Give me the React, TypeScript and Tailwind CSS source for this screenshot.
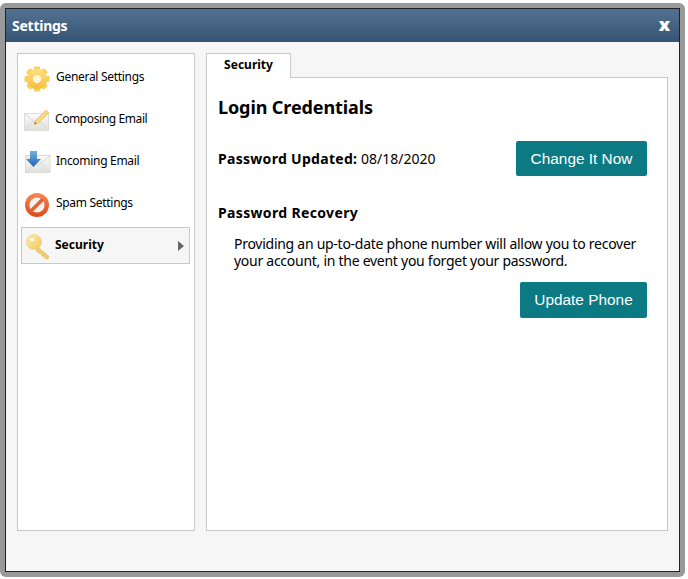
import type { ReactNode } from 'react'

const tahoma = 'font-["Noto_Sans",sans-serif]'

function GearIcon() {
  const teeth = [0, 45, 90, 135, 180, 225, 270, 315]
  return (
    <svg width="26" height="26" viewBox="0 0 26 26">
      <defs>
        <linearGradient id="gear" x1="0" y1="0" x2="0" y2="1">
          <stop offset="0" stopColor="#fddc7c" />
          <stop offset="1" stopColor="#f8c145" />
        </linearGradient>
      </defs>
      {teeth.map((a) => (
        <rect key={a} x="10" y="0.5" width="6" height="6" rx="1" fill="#fbcd5c" transform={`rotate(${a} 13 13)`} />
      ))}
      <circle cx="13" cy="13" r="7" fill="none" stroke="url(#gear)" strokeWidth="6.500" />
      <circle cx="13" cy="13" r="3.800" fill="#fdf6dc" />
    </svg>
  )
}

function PencilEnvelopeIcon() {
  return (
    <svg width="26" height="22" viewBox="0 0 26 22">
      <defs>
        <linearGradient id="env1" x1="0" y1="0" x2="0" y2="1">
          <stop offset="0" stopColor="#fbfbf9" />
          <stop offset="1" stopColor="#dfe0dc" />
        </linearGradient>
      </defs>
      <rect x="0.5" y="4.500" width="24" height="17" fill="url(#env1)" stroke="#dcdcd8" />
      <path d="M1 5l11.500 9L24 5M1 21l8.500-9M24 21l-8.500-9" fill="none" stroke="#d9d9d4" />
      <path d="M10 15.500l2-4.500L22 1l3 2.500-10 10.500z" fill="#f8d780" stroke="#ecc05c" strokeWidth="0.6" />
      <path d="M10 15.500l1-3 2 2z" fill="#a9814a" />
    </svg>
  )
}

function ArrowEnvelopeIcon() {
  return (
    <svg width="26" height="22" viewBox="0 0 26 22">
      <defs>
        <linearGradient id="env2" x1="0" y1="0" x2="0" y2="1">
          <stop offset="0" stopColor="#fbfbf9" />
          <stop offset="1" stopColor="#dfe0dc" />
        </linearGradient>
        <linearGradient id="arrow" x1="0" y1="0" x2="0" y2="1">
          <stop offset="0" stopColor="#76aee0" />
          <stop offset="1" stopColor="#1b66b4" />
        </linearGradient>
      </defs>
      <rect x="0.5" y="4.500" width="24.500" height="17" fill="url(#env2)" stroke="#dcdcd8" />
      <path d="M1 5l12 9 12-9M1 21l9-9M25 21l-9-9" fill="none" stroke="#d9d9d4" />
      <path d="M5 0h7v8h4l-7.500 8L1 8h4z" fill="url(#arrow)" />
    </svg>
  )
}

function BanIcon() {
  return (
    <svg width="26" height="26" viewBox="0 0 26 26">
      <defs>
        <linearGradient id="ban" x1="0" y1="0" x2="0" y2="1">
          <stop offset="0" stopColor="#f58a55" />
          <stop offset="1" stopColor="#dd4a1c" />
        </linearGradient>
      </defs>
      <circle cx="13" cy="13" r="12" fill="url(#ban)" />
      <circle cx="13" cy="13" r="7.600" fill="#f5f1ec" />
      <path d="M6 17.500L17.500 6l2.500 2.500L8.500 20z" fill="#e8602c" />
    </svg>
  )
}

function KeyIcon() {
  return (
    <svg width="25" height="26" viewBox="0 0 25 26">
      <defs>
        <linearGradient id="key" x1="0" y1="0" x2="1" y2="1">
          <stop offset="0" stopColor="#fdeea8" />
          <stop offset="1" stopColor="#edc866" />
        </linearGradient>
      </defs>
      <path d="M12 13l11 9.500-1 2.500-3-.5-1-2.500-2 .2-.5-2.500-2.500-.2-3-2.500z" fill="#f0cc70" stroke="#deb552" strokeWidth="0.5" />
      <circle cx="8" cy="8" r="7.600" fill="url(#key)" stroke="#ecca70" strokeWidth="0.6" />
      <ellipse cx="6" cy="5.500" rx="2.200" ry="1.800" fill="#fffbe0" />
    </svg>
  )
}

interface MenuItemProps {
  icon: ReactNode
  label: string
  active?: boolean
  iconClass?: string
  textClass?: string
}

function MenuItem({ icon, label, active, iconClass, textClass }: MenuItemProps) {
  return (
    <div
      className={
        active
          ? 'h-[37px] flex items-center border border-[#c8c8c8] bg-[#f6f6f6]'
          : 'h-[37px] flex items-center border border-transparent'
      }
    >
      <div className={`w-[33px] flex-shrink-0 flex justify-center ${iconClass ?? ''}`}>{icon}</div>
      <span className={`${tahoma} text-[12px] text-black ${active ? 'font-bold' : ''} ${textClass ?? ''}`}>{label}</span>
      {active && (
        <div className="ml-auto mr-[5px] w-0 h-0 border-y-[5px] border-y-transparent border-l-[6px] border-l-[#666]" />
      )}
    </div>
  )
}

export default function App() {
  return (
    <div className="w-[688px] h-[579px] bg-white pt-[3px]">
      <div className="w-[685px] h-[574px] bg-[#999999] rounded-[6px] p-[5px]">
        <div className="h-full border border-[#222] flex flex-col bg-[#f6f6f6]">
          {/* Title bar */}
          <div className="h-[33px] flex-shrink-0 flex items-center justify-between pl-[6px] pr-[9px] bg-gradient-to-b from-[#537191] to-[#365574]">
            <span className={`${tahoma} text-[14px] font-bold text-white tracking-[-0.25px]`}>Settings</span>
            <span className={`${tahoma} text-[18px] font-black text-white leading-none -mt-[3px]`}>x</span>
          </div>

          {/* Body */}
          <div className="flex-1 flex gap-[11px] pt-[11px] pb-[40px] px-[11px]">
            {/* Sidebar */}
            <nav className="w-[178px] flex-shrink-0 border border-[#c8c8c8] bg-white pt-[5px] pl-[3px] pr-[4px] flex flex-col gap-[5px]">
              <MenuItem icon={<GearIcon />} label="General Settings" iconClass="-ml-[2px] mr-[2px] mt-[3px]" textClass="ml-[1px] -mt-[1px] tracking-[-0.3px]" />
              <MenuItem icon={<PencilEnvelopeIcon />} label="Composing Email" iconClass="-ml-[2px] mr-[2px] mt-[1px]" textClass="-mt-[2px] tracking-[-0.4px]" />
              <MenuItem icon={<ArrowEnvelopeIcon />} label="Incoming Email" iconClass="-ml-[1px] mr-[1px]" textClass="ml-[1px] -mt-[2px] tracking-[-0.3px]" />
              <MenuItem icon={<BanIcon />} label="Spam Settings" iconClass="-ml-[2px] mr-[2px] mt-[2px]" textClass="ml-[1px] -mt-[2px] tracking-[-0.3px]" />
              <MenuItem icon={<KeyIcon />} label="Security" active iconClass="mt-[2px]" textClass="-mt-[2px]" />
            </nav>

            {/* Main panel */}
            <div className="flex-1 flex flex-col">
              <div className="relative z-10 w-[85px] h-[25px] -mb-[1px] border border-b-0 border-[#c8c8c8] bg-white flex items-center justify-center">
                <span className={`${tahoma} text-[12px] font-bold text-black -mt-[2px]`}>Security</span>
              </div>
              <div className="flex-1 border border-[#c8c8c8] bg-white px-[11px] text-black">
                <h2 className={`${tahoma} text-[18px] font-bold mt-[18px] leading-[22px] tracking-[-0.1px]`}>Login Credentials</h2>
                <div className="flex items-center justify-between mt-[23px] pr-[9px]">
                  <p className={`${tahoma} text-[14px]`}>
                    <span className="font-bold tracking-[0.3px]">Password Updated:</span> 08/18/2020
                  </p>
                  <button className="w-[131px] h-[35px] rounded-[2px] bg-[#0b7a82] text-white text-[15.4px] font-['Liberation_Sans',sans-serif]">
                    Change It Now
                  </button>
                </div>
                <h3 className={`${tahoma} text-[14px] font-bold mt-[28px] leading-[18px] tracking-[0.35px]`}>Password Recovery</h3>
                <p className={`${tahoma} text-[14px] leading-[17px] mt-[13px] ml-[16px] pr-[4px] tracking-[-0.27px]`}>
                  Providing an up-to-date phone number will allow you to recover your account, in the event you forget your password.
                </p>
                <div className="flex justify-end mt-[13px] pr-[9px]">
                  <button className="w-[127px] h-[36px] rounded-[2px] bg-[#0b7a82] text-white text-[15.4px] font-['Liberation_Sans',sans-serif]">
                    Update Phone
                  </button>
                </div>
              </div>
            </div>
          </div>
        </div>
      </div>
    </div>
  )
}
